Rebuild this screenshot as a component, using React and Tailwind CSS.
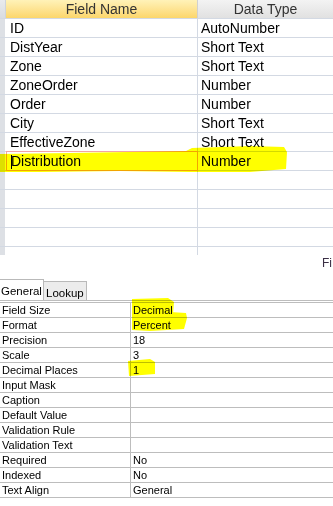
const FIELDS = [
    ["ID", "AutoNumber"],
    ["DistYear", "Short Text"],
    ["Zone", "Short Text"],
    ["ZoneOrder", "Number"],
    ["Order", "Number"],
    ["City", "Short Text"],
    ["EffectiveZone", "Short Text"],
    ["Distribution", "Number"],
    ["", ""],
    ["", ""],
    ["", ""],
    ["", ""],
    ["", ""],
];

const PROPS = [
    ["Field Size", "Decimal"],
    ["Format", "Percent"],
    ["Precision", "18"],
    ["Scale", "3"],
    ["Decimal Places", "1"],
    ["Input Mask", ""],
    ["Caption", ""],
    ["Default Value", ""],
    ["Validation Rule", ""],
    ["Validation Text", ""],
    ["Required", "No"],
    ["Indexed", "No"],
    ["Text Align", "General"],
];

// marker strokes someone drew over the screenshot
function Highlights() {
    return (
        <svg
            className="absolute inset-0 pointer-events-none mix-blend-multiply"
            width="333"
            height="506"
            viewBox="0 0 333 506"
        >
            <g fill="#ffff00">
                <polygon points="0,154 70,153 186,151 192,148 250,146 284,147 287,152 286,169 250,172 190,172 120,171 40,172 0,172" />
                <polygon points="132,299 168,298 174,302 173,314 132,314" />
                <polygon points="132,313 170,312 186,313 187,318 184,329 150,331 132,330" />
                <polygon points="128,361 150,359 155,362 155,374 129,376" />
            </g>
        </svg>
    );
}

export default function App() {
    return (
        <div
            className="relative w-[333px] h-[506px] bg-white overflow-hidden text-black"
            style={{ fontFamily: "'Liberation Sans', Arial, sans-serif" }}
        >
            {/* table design grid */}
            <div className="h-[255px] overflow-hidden text-[14px]">
                <div className="flex h-[19px] border-b border-[#d3d9e3]">
                    <div className="w-[6px] bg-gradient-to-b from-[#e9ebee] to-[#d9dce1] border-r border-[#cfd4db]" />
                    <div className="w-[192px] flex items-center justify-center bg-gradient-to-b from-[#fff2b8] to-[#fcd66a] border-r border-[#d0d0d0] text-[#333]">
                        Field Name
                    </div>
                    <div className="flex-1 flex items-center justify-center bg-gradient-to-b from-[#f3f3f3] to-[#e1e1e1] text-[#333]">
                        Data Type
                    </div>
                </div>
                {FIELDS.map(([name, type], i) => (
                    <div key={i} className="flex h-[19px] border-b border-[#d3d9e3]">
                        <div className="w-[6px] bg-[#dde0e5] border-r border-white" />
                        <div
                            className={
                                name === "Distribution"
                                    ? "relative w-[192px] flex items-center pl-[4px] border border-[#f2a4a4] -mt-px h-[20px]"
                                    : "w-[192px] flex items-center pl-[4px] border-r border-[#d3d9e3]"
                            }
                        >
                            {name === "Distribution" && (
                                <span className="absolute left-[4px] top-[3px] w-px h-[14px] bg-black" />
                            )}
                            {name}
                        </div>
                        <div className="flex-1 flex items-center pl-[3px]">{type}</div>
                    </div>
                ))}
            </div>

            <div className="h-[24px] flex justify-end items-start pt-[1px] pr-[1px] text-[12px] leading-[14px] text-[#3b2f45]">
                <span>Fi</span>
            </div>

            {/* property tabs */}
            <div className="flex items-end h-[21px] text-[11.5px]">
                <div className="h-[21px] w-[44px] bg-white border-t border-r border-[#b9b9b9] pl-[1px] pt-[3px]">
                    General
                </div>
                <div className="h-[19px] w-[43px] bg-[#ececec] border-t border-r border-[#b9b9b9] pl-[2px] pt-[3px]">
                    Lookup
                </div>
            </div>

            <div className="border-t-[3px] border-double border-[#bdbdbd] text-[11px]">
                {PROPS.map(([label, value]) => (
                    <div key={label} className="flex h-[15px] border-b border-[#bdbdbd] leading-[14px]">
                        <div className="w-[131px] pl-[2px] border-r border-[#bdbdbd]">{label}</div>
                        <div className="flex-1 pl-[2px]">{value}</div>
                    </div>
                ))}
            </div>

            <Highlights />
        </div>
    );
}
